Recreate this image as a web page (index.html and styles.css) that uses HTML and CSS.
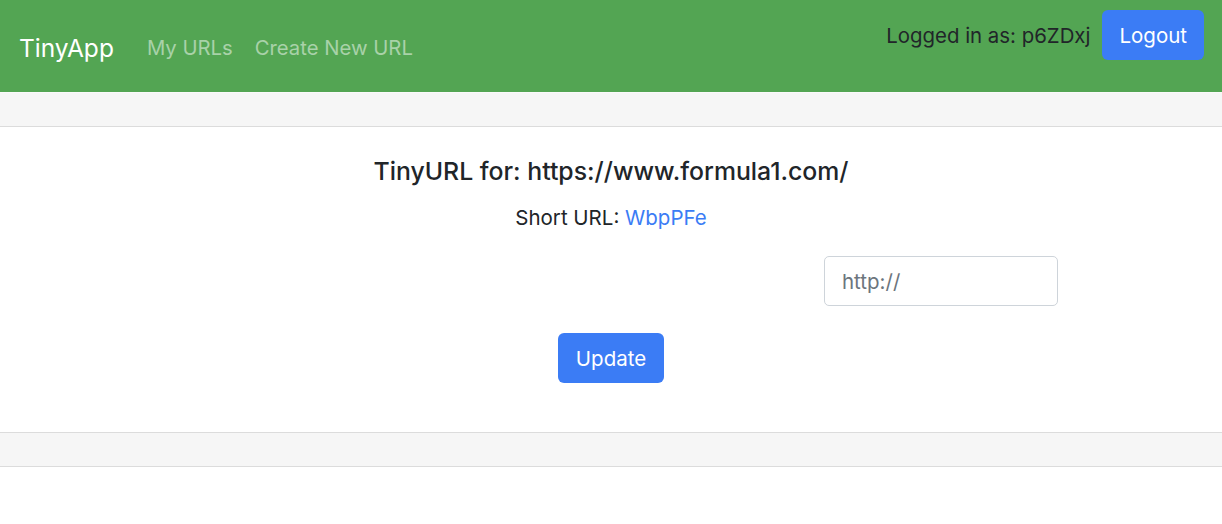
FILE: index.html
```html
<!DOCTYPE html>
<html lang="en">
<head>
<meta charset="utf-8">
<title>TinyApp</title>
<link rel="stylesheet" href="styles.css">
</head>
<body>
<nav class="navbar">
  <a class="brand" href="#">TinyApp</a>
  <div class="nav-links">
    <a class="nav-link" href="#">My URLs</a>
    <a class="nav-link" href="#">Create New URL</a>
  </div>
  <div class="nav-right">
    <span class="user">Logged in as: p6ZDxj</span>
    <button class="btn btn-primary logout" type="button">Logout</button>
  </div>
</nav>
<div class="card">
  <div class="card-header"></div>
  <div class="card-body">
    <h5 class="card-title">TinyURL for: https://www.formula1.com/</h5>
    <p class="card-text">Short URL: <a href="#">WbpPFe</a></p>
    <form class="edit-form">
      <div class="input-row">
        <input class="form-control" type="text" placeholder="http://">
      </div>
      <button class="btn btn-primary update" type="submit">Update</button>
    </form>
  </div>
  <div class="card-footer"></div>
</div>
</body>
</html>
```
FILE: styles.css
```css
* { box-sizing: border-box; }
html, body { margin: 0; padding: 0; }
body {
  font-family: Inter, "Liberation Sans", Arial, sans-serif;
  font-size: 20.5px;
  line-height: 1.5;
  color: #212529;
  background: #fff;
}
.navbar {
  height: 92px;
  background: #53a553;
  display: flex;
  align-items: center;
  padding: 0 18px 0 19px;
}
.brand {
  color: #fff;
  text-decoration: none;
  font-size: 24.5px;
  margin-right: 33px;
  padding-top: 4px;
}
.nav-links { display: flex; gap: 22px; padding-top: 4px; }
.nav-link {
  color: rgba(255,255,255,0.5);
  text-decoration: none;
  font-size: 20.3px;
}
.nav-right {
  margin-left: auto;
  display: flex;
  align-items: center;
  gap: 12px;
  margin-top: -22px;
}
.user { color: #212529; font-size: 20.4px; padding-top: 2px; }
.btn {
  font-family: inherit;
  font-size: 20.5px;
  border: 0;
  border-radius: 6px;
  color: #fff;
  cursor: pointer;
}
.btn-primary { background: #3b7cf5; }
.logout { height: 50px; padding: 0 17px; }
.card {
  border-top: 1px solid #fafafa;
}
.card-header, .card-footer {
  background: #f6f6f6;
}
.card-header { border-bottom: 1px solid #dcdcdc; height: 34px; }
.card-footer { border-top: 1px solid #dcdcdc; border-bottom: 1px solid #dcdcdc; height: 35px; }
.card-body {
  text-align: center;
  padding: 28px 0 49px;
}
.card-title {
  margin: 0 0 15px;
  font-size: 24.8px;
  font-weight: 500;
  line-height: 32px;
}
.card-text { margin: 0 0 22px; line-height: 32px; }
.card-text a { color: #3b7cf5; text-decoration: none; }
.edit-form { display: flex; flex-direction: column; align-items: center; }
.input-row {
  align-self: stretch;
  display: flex;
  justify-content: flex-end;
  padding-right: 164px;
  margin-bottom: 27px;
}
.form-control {
  width: 234px;
  height: 50px;
  border: 1px solid #ced4da;
  border-radius: 5px;
  padding: 0 17px;
  font-family: inherit;
  font-size: 20.5px;
  color: #495057;
}
.form-control::placeholder { color: #6c757d; }
.update { height: 50px; padding: 0 18px; }
```
